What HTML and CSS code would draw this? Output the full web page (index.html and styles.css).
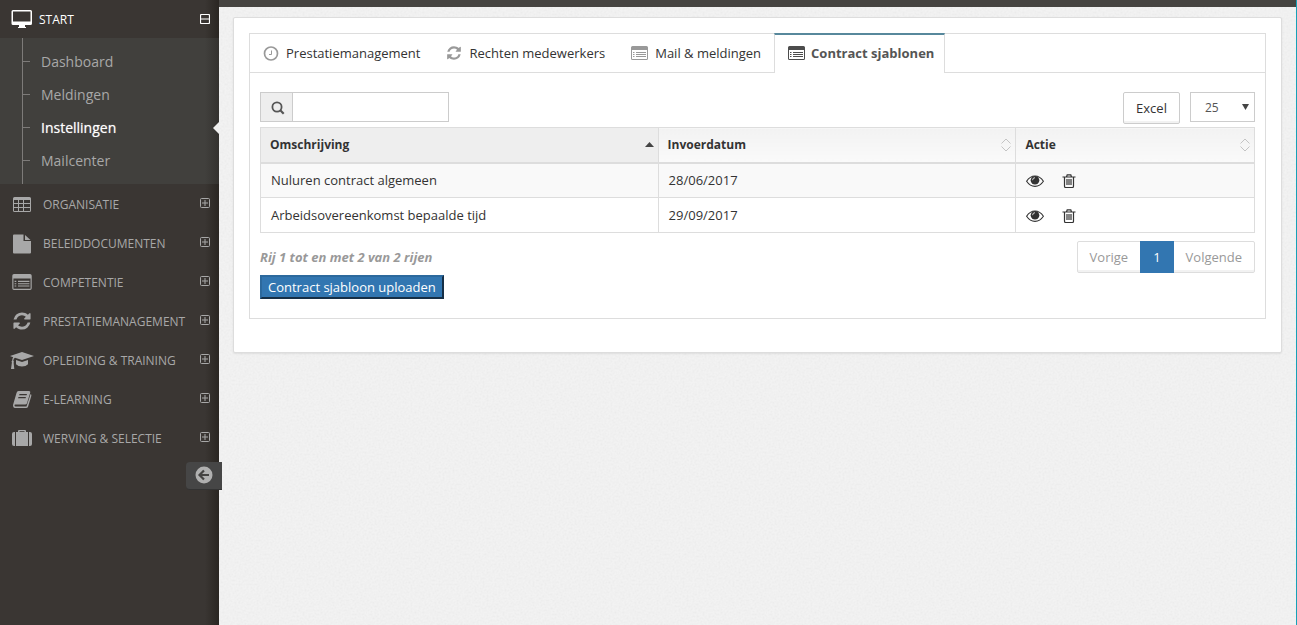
FILE: index.html
```html
<!DOCTYPE html>
<html lang="nl">
<head>
<meta charset="utf-8">
<title>Contract sjablonen</title>
<meta name="viewport" content="width=device-width, initial-scale=1">
<link rel="stylesheet" href="styles.css">
</head>
<body>
<svg class="sprite" aria-hidden="true">
  <symbol id="plus" viewBox="0 0 10 10"><path d="M.5 1.500q0-1 1-1h7q1 0 1 1v7q0 1-1 1h-7q-1 0-1-1zM2 5h6M5 2v6" fill="none" stroke="currentColor"/></symbol>
  <symbol id="refresh" viewBox="0 0 1792 1792"><path fill="currentColor" d="M1639 1056q0 5-1 7-64 268-268 434.5t-478 166.5q-146 0-282.5-55t-243.5-157l-129 129q-19 19-45 19t-45-19-19-45v-448q0-26 19-45t45-19h448q26 0 45 19t19 45-19 45l-137 137q71 66 161 102t187 36q134 0 250-65t186-179q11-17 53-117 8-23 30-23h192q13 0 22.500 9.500t9.500 22.500zm25-800v448q0 26-19 45t-45 19h-448q-26 0-45-19t-19-45 19-45l138-138q-148-137-349-137-134 0-250 65t-186 179q-11 17-53 117-8 23-30 23h-199q-13 0-22.500-9.500t-9.500-22.500v-7q65-268 270-434.500t480-166.500q146 0 284 55.500t245 156.500l130-129q19-19 45-19t45 19 19 45z"/></symbol>
  <symbol id="list" viewBox="0 0 17 14"><path fill="currentColor" fill-rule="evenodd" d="M1.500 0h14Q17 0 17 1.500v11q0 1.500-1.500 1.500h-14Q0 14 0 12.500v-11Q0 0 1.500 0zM1 4v8.500q0 .5.500.5h14q.5 0 .5-.5V4zM2 6h1.500v1H2zM5 6h10v1H5zM2 8h1.500v1H2zM5 8h10v1H5zM2 10h1.500v1H2zM5 10h10v1H5z"/></symbol>
  <symbol id="sort" viewBox="0 0 10 14"><path d="M.5 5.500 5 1l4.500 4.500M.5 8.500 5 13l4.500-4.500" fill="none" stroke="currentColor"/></symbol>
  <symbol id="eye" viewBox="0 0 18 12"><path d="M.6 6.300Q4 1 9 1t8.400 5.300Q14 11.400 9 11.400T.6 6.300z" fill="none" stroke="currentColor" stroke-width="1.100"/><circle cx="9" cy="5.200" r="4.300" fill="currentColor"/><path d="M6.600 5.200Q6.600 2.700 9 2.700" fill="none" stroke="#fff" stroke-width=".8"/></symbol>
  <symbol id="trash" viewBox="0 0 14 14"><path d="M.5 3h13M4.500 3l.7-2.200h3.600L9.500 3M2.500 3v9.200q0 1.300 1.200 1.300h6.600q1.200 0 1.200-1.300V3M5 5v6M7 5v6M9 5v6" fill="none" stroke="currentColor" stroke-width="1.200"/></symbol>
</svg>
<div class="app">
  <aside class="sidebar">
    <nav>
      <a class="item item-open" href="#">
        <svg class="icon" viewBox="0 0 24 24"><path fill="currentColor" fill-rule="evenodd" d="M3 2h17.500Q22 2 22 3.500v12q0 1.500-1.500 1.500H15v2h1v1H8v-1h1v-2H3q-1.500 0-1.500-1.500v-12Q1.500 2 3 2zm0 1.500v10h17.500v-10z"/></svg>
        <span>START</span>
        <svg class="toggle" viewBox="0 0 10 10"><path d="M.5 1.500q0-1 1-1h7q1 0 1 1v7q0 1-1 1h-7q-1 0-1-1zM1 5h8" fill="none" stroke="currentColor" stroke-width="1.200"/></svg>
      </a>
      <ul class="sub">
        <li><a href="#">Dashboard</a></li>
        <li><a href="#">Meldingen</a></li>
        <li class="current"><a href="#">Instellingen</a></li>
        <li><a href="#">Mailcenter</a></li>
      </ul>
      <a class="item" href="#">
        <svg class="icon" viewBox="0 0 24 24"><path fill="currentColor" fill-rule="evenodd" d="M4.500 4h15Q21 4 21 5.500v12q0 1.500-1.500 1.500h-15Q3 19 3 17.500v-12Q3 4 4.500 4zM4 7v3h4V7zm5 0v3h4V7zm5 0v3h6V7zM4 11v3h4v-3zm5 0v3h4v-3zm5 0v3h6v-3zM4 15v3h4v-3zm5 0v3h4v-3zm5 0v3h6v-3z"/></svg>
        <span>ORGANISATIE</span><svg class="toggle"><use href="#plus"/></svg>
      </a>
      <a class="item" href="#">
        <svg class="icon" viewBox="0 0 24 24"><path fill="currentColor" d="M4 2.500h9.500V9H21v11.500q0 1-1 1H4q-1 0-1-1v-17q0-1 1-1zM15 3l5.500 5H15z"/></svg>
        <span>BELEIDDOCUMENTEN</span><svg class="toggle"><use href="#plus"/></svg>
      </a>
      <a class="item" href="#">
        <svg class="icon icon-list"><use href="#list"/></svg>
        <span>COMPETENTIE</span><svg class="toggle"><use href="#plus"/></svg>
      </a>
      <a class="item" href="#">
        <svg class="icon icon-refresh"><use href="#refresh"/></svg>
        <span>PRESTATIEMANAGEMENT</span><svg class="toggle"><use href="#plus"/></svg>
      </a>
      <a class="item" href="#">
        <svg class="icon" viewBox="0 0 24 24"><path fill="currentColor" d="M12 3l12 4-12 4L5 8.700q-1.600.7-1.700 3 1.200.8.300 1.900L4.300 20H1l.9-6.400q-.9-1.200.3-2 0-1.900 1-3.400L0 7zM6 11l6 2 6-2v4.300Q16 17.500 12 17.500T6 15.300z"/></svg>
        <span>OPLEIDING &amp; TRAINING</span><svg class="toggle"><use href="#plus"/></svg>
      </a>
      <a class="item" href="#">
        <svg class="icon" viewBox="0 0 24 24"><path fill="currentColor" fill-rule="evenodd" d="M8.500 3H19q1.700 0 1.200 1.700L17 15.300Q16.700 16.500 15 16.500H5.300q-1 0-.8 1t1 1h11L20.600 6q1.200.6.700 2l-3.200 10.500Q17.600 20 16 20H5q-2 0-2-3L6.500 5Q7 3 8.500 3zM9.500 6l-.4 1.200h7.500L17 6zm-1 3L8 10.200h7.600l.3-1.200z"/></svg>
        <span>E-LEARNING</span><svg class="toggle"><use href="#plus"/></svg>
      </a>
      <a class="item" href="#">
        <svg class="icon" viewBox="0 0 24 24"><path fill="currentColor" fill-rule="evenodd" d="M8 5V4q0-1 1-1h6q1 0 1 1v1h2v14H6V5zM9.500 5h5V4.200h-5zM5 5v14H4q-2 0-2-2V7q0-2 2-2zM19 5h1q2 0 2 2v10q0 2-2 2h-1z"/></svg>
        <span>WERVING &amp; SELECTIE</span><svg class="toggle"><use href="#plus"/></svg>
      </a>
    </nav>
    <button class="collapse" type="button" aria-label="Menu inklappen">
      <svg viewBox="0 0 18 18"><circle cx="9" cy="9" r="8.500" fill="#b0b0b0"/><path d="M14 9H5M9 4.500 4.500 9 9 13.500" fill="none" stroke="#444342" stroke-width="2.200"/></svg>
    </button>
  </aside>
  <div class="page">
    <div class="topbar"></div>
    <main class="panel">
      <section class="box">
        <nav class="tabs">
          <a class="tab" href="#"><svg class="tab-round" viewBox="0 0 16 16"><circle cx="8" cy="8.500" r="6.500" fill="none" stroke="currentColor" stroke-width="1.700"/><path d="M8.500 5.500v4H6" fill="none" stroke="currentColor"/></svg>Prestatiemanagement</a>
          <a class="tab" href="#"><svg class="tab-round"><use href="#refresh"/></svg>Rechten medewerkers</a>
          <a class="tab" href="#"><svg class="tab-list"><use href="#list"/></svg>Mail &amp; meldingen</a>
          <a class="tab tab-active" href="#"><svg class="tab-list"><use href="#list"/></svg>Contract sjablonen</a>
        </nav>
        <div class="content">
          <div class="toolbar">
            <div class="search">
              <label for="q"><svg viewBox="0 0 14 14"><circle cx="6" cy="6" r="4.600" fill="none" stroke="#555" stroke-width="1.800"/><path d="M9.300 9.300l3.400 3.400" stroke="#555" stroke-width="2.200"/></svg></label>
              <input id="q" type="text" aria-label="Zoeken">
            </div>
            <div class="tools">
              <button class="excel" type="button">Excel</button>
              <div class="length">
                <select aria-label="Aantal rijen"><option>25</option></select>
                <svg viewBox="0 0 7 6" aria-hidden="true"><path d="M0 0h7L3.500 6z" fill="#444"/></svg>
              </div>
            </div>
          </div>
          <table>
            <thead>
              <tr>
                <th class="c1 sorted"><div>Omschrijving<svg class="up" viewBox="0 0 9 5"><path d="M0 5 4.500 0 9 5z" fill="#444"/></svg></div></th>
                <th class="c2"><div>Invoerdatum<svg class="sort"><use href="#sort"/></svg></div></th>
                <th class="c3"><div>Actie<svg class="sort"><use href="#sort"/></svg></div></th>
              </tr>
            </thead>
            <tbody>
              <tr>
                <td>Nuluren contract algemeen</td><td>28/06/2017</td>
                <td><div class="actions"><button type="button" aria-label="Bekijken"><svg class="eye"><use href="#eye"/></svg></button><button type="button" aria-label="Verwijderen"><svg class="trash"><use href="#trash"/></svg></button></div></td>
              </tr>
              <tr>
                <td>Arbeidsovereenkomst bepaalde tijd</td><td>29/09/2017</td>
                <td><div class="actions"><button type="button" aria-label="Bekijken"><svg class="eye"><use href="#eye"/></svg></button><button type="button" aria-label="Verwijderen"><svg class="trash"><use href="#trash"/></svg></button></div></td>
              </tr>
            </tbody>
          </table>
          <div class="footer">
            <div class="summary">
              <p>Rij 1 tot en met 2 van 2 rijen</p>
              <button class="upload" type="button">Contract sjabloon uploaden</button>
            </div>
            <nav class="pager"><a href="#">Vorige</a><a class="on" href="#">1</a><a href="#">Volgende</a></nav>
          </div>
        </div>
      </section>
    </main>
  </div>
</div>
</body>
</html>
```
FILE: styles.css
```css
* { box-sizing: border-box; }
body {
  margin: 0;
  font: 13px/20px "Open Sans", sans-serif;
  color: #333;
}
a { color: inherit; text-decoration: none; }
button, input, select { font: inherit; color: inherit; margin: 0; }
svg { display: block; flex: none; }
.sprite { position: absolute; width: 0; height: 0; }

.app { display: flex; min-height: 100vh; }

/* Sidebar */
.sidebar {
  position: relative;
  flex: none;
  width: 219px;
  background: linear-gradient(to left, #2a2622, #3a3633 14px);
  color: #a8a8a8;
}
.item {
  display: flex;
  align-items: center;
  gap: 9px;
  height: 39px;
  padding: 2px 9px 0 10px;
  font-size: 12px;
}
.item-open { height: 38px; gap: 5px; color: #fff; }
.icon { width: 24px; height: 24px; }
.icon-list { height: 16px; padding: 0 2px; margin-bottom: 2px; }
.icon-refresh { height: 20px; margin-bottom: 2px; }
.toggle { width: 10px; height: 10px; margin: 0 0 3px auto; }
.sub {
  position: relative;
  margin: 0;
  padding: 7px 0 7px 22px;
  list-style: none;
  font-size: 14px;
  background: linear-gradient(to left, #34322f, #41403d 14px) no-repeat;
}
.sub::before {
  content: "";
  position: absolute;
  left: 22px;
  top: 0;
  bottom: 0;
  border-left: 1px solid #7d7b79;
}
.sub li {
  display: flex;
  align-items: center;
  gap: 11px;
  height: 33px;
}
.sub li::before {
  content: "";
  width: 8px;
  border-top: 1px solid #7d7b79;
}
.sub .current { color: #fff; text-shadow: 0 0 1px rgba(255,255,255,.6); }
.current::after {
  content: "";
  margin-left: auto;
  border: 6px solid transparent;
  border-right-color: #efefef;
  border-left: 0;
}
.collapse {
  display: flex;
  align-items: center;
  justify-content: center;
  position: absolute;
  top: 462px;
  right: -3px;
  width: 36px;
  height: 28px;
  padding: 0 0 1px;
  border: 0;
  border-bottom: 1px solid #333;
  border-radius: 4px 0 0 4px;
  background: #464646;
}
.collapse svg { width: 18px; height: 18px; }

/* Page */
.page {
  flex: 1;
  min-width: 0;
  border-right: 1px solid #17a2b8;
  background: #f2f2f2 url("data:image/svg+xml,%3Csvg xmlns='http://www.w3.org/2000/svg' width='200' height='200'%3E%3Cfilter id='n'%3E%3CfeTurbulence type='fractalNoise' baseFrequency='.5' numOctaves='2' stitchTiles='stitch'/%3E%3CfeColorMatrix values='0 0 0 0 .5 0 0 0 0 .5 0 0 0 0 .5 .24 0 0 0 -.09'/%3E%3C/filter%3E%3Crect width='200' height='200' filter='url(%23n)'/%3E%3C/svg%3E");
}
.topbar { height: 7px; background: #464441; }
.panel {
  margin: 10px 14px;
  padding: 15px 15px 33px;
  border: 1px solid #ddd;
  border-radius: 2px;
  background: #fff;
  box-shadow: 0 1px 2px rgba(0,0,0,.08);
}
.box { border: 1px solid #ddd; }

/* Tabs */
.tabs {
  display: flex;
  height: 39px;
  border-bottom: 1px solid #ddd;
}
.tab {
  display: flex;
  align-items: center;
  gap: 7px;
  padding: 0 13px;
}
.tab svg { color: #999; }
.tab-round { width: 16px; height: 16px; }
.tab-list { width: 17px; height: 14px; }
.tab-active {
  gap: 6px;
  margin: -1px 0;
  padding: 0 10px 3px 13px;
  border: 1px solid #ddd;
  border-top: 2px solid #57889c;
  border-bottom: 0;
  background: #fff;
  color: #555;
  font-weight: 700;
}
.tab-active svg { color: #4c4c4c; }

/* Content */
.content { padding: 19px 10px; }
.toolbar {
  display: flex;
  justify-content: space-between;
  height: 35px;
}
.search { display: flex; width: 189px; height: 30px; }
.search label {
  display: flex;
  align-items: center;
  justify-content: center;
  width: 32px;
  padding: 2px 0 0 2px;
  border: 1px solid #ccc;
  border-right: 0;
  background: #eee;
}
.search svg { width: 14px; height: 14px; }
.search input {
  flex: 1;
  min-width: 0;
  border: 1px solid #ccc;
  background: #fff;
}
.tools { display: flex; gap: 10px; }
.excel {
  width: 57px;
  height: 32px;
  padding: 0;
  border: 1px solid #ccc;
  border-radius: 2px;
  background: #fff;
  box-shadow: inset 0 -2px 0 rgba(0,0,0,.05);
}
.length { position: relative; width: 65px; height: 30px; }
.length select {
  width: 100%;
  height: 100%;
  padding: 1px 14px 0;
  appearance: none;
  border: 1px solid #ccc;
  border-radius: 0;
  background: #fff;
  color: #555;
  font-size: 12px;
}
.length svg { position: absolute; right: 6px; top: 12px; width: 7px; height: 6px; }

table {
  width: 100%;
  table-layout: fixed;
  border-collapse: collapse;
}
.c1 { width: 40%; }
.c2 { width: 36%; }
.c3 { width: 24%; }
th, td { border: 1px solid #ddd; text-align: left; }
th {
  height: 35px;
  padding: 0 4px 0 9px;
  border-bottom-width: 2px;
  background: linear-gradient(#f2f2f2, #fafafa);
  font-size: 12px;
}
th div { display: flex; align-items: center; justify-content: space-between; }
.sorted { background: #eee; }
.up { width: 9px; height: 5px; }
.sort { width: 10px; height: 14px; color: #c4c4c4; }
td { height: 35px; padding: 0 10px; }
tbody tr:first-child { background: #f9f9f9; }
.actions { display: flex; align-items: center; gap: 18px; padding-top: 1px; }
.actions button { padding: 0; border: 0; background: none; }
.eye { width: 18px; height: 12px; }
.trash { width: 14px; height: 14px; }

.footer { display: flex; justify-content: space-between; align-items: flex-start; margin-top: 8px; }
.summary p {
  margin: 6px 0 8px;
  color: #999;
  font-style: italic;
  font-weight: 700;
}
.upload {
  height: 24px;
  padding: 0 6px;
  border: 2px solid;
  border-color: #2c699d #162f46 #162f46 #2c699d;
  background: #3276b1;
  color: #fff;
  line-height: 18px;
}
.pager {
  display: flex;
  height: 32px;
  border: 1px solid #ddd;
  border-radius: 2px;
  background: #fff;
  box-shadow: inset 0 -2px 0 rgba(0,0,0,.05);
  color: #999;
}
.pager a { padding: 5px 12px; }
.pager .on { margin: -1px 0; padding: 6px 13px; background: #3276b1; color: #fff; }
```
